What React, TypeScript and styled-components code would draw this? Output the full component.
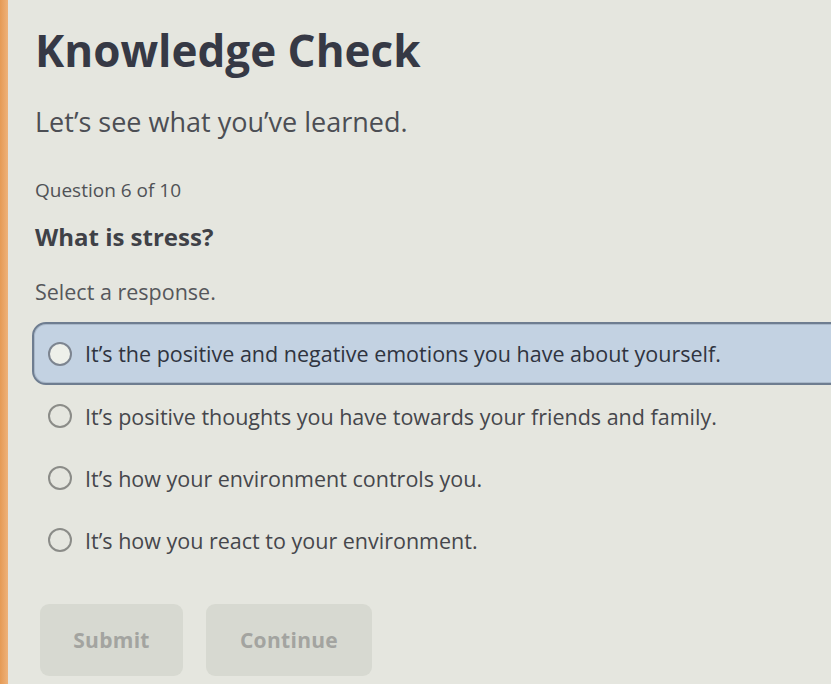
import styled, { createGlobalStyle } from "styled-components";

const GlobalStyle = createGlobalStyle`
  html, body {
    margin: 0;
    padding: 0;
    background: #e5e6df;
  }
  body {
    font-family: "Open Sans", "Liberation Sans", sans-serif;
    color: #3c3e48;
  }
`;

const Page = styled.div`
  display: flex;
  width: 831px;
  height: 684px;
  overflow: hidden;
  background: #e5e6df;
`;

const AccentStrip = styled.div`
  flex: 0 0 8px;
  background: linear-gradient(90deg, #e59a55, #eeb27a);
`;

const Content = styled.main`
  flex: 1;
  display: flex;
  flex-direction: column;
  padding: 22px 0 0 27px;
`;

const Title = styled.h1`
  margin: 0;
  font-size: 44px;
  font-weight: 700;
  line-height: 56px;
  color: #363945;
`;

const Intro = styled.p`
  margin: 27px 0 0;
  font-size: 27px;
  line-height: 34px;
  color: #4c4e54;
`;

const Counter = styled.div`
  margin-top: 39px;
  font-size: 19px;
  line-height: 24px;
  color: #505256;
`;

const Question = styled.h2`
  margin: 20px 0 0;
  font-size: 24px;
  font-weight: 700;
  line-height: 30px;
  color: #3f4147;
`;

const Prompt = styled.div`
  margin-top: 26px;
  font-size: 21.5px;
  line-height: 28px;
  color: #55575b;
`;

const Options = styled.div`
  display: flex;
  flex-direction: column;
  margin: 16px -40px 0 -3px;
`;

const Option = styled.label<{ $active?: boolean }>`
  display: flex;
  align-items: center;
  gap: 13px;
  height: ${(p) => (p.$active ? "63px" : "62px")};
  box-sizing: border-box;
  padding-left: 14px;
  border: 2px solid ${(p) => (p.$active ? "#6e7d90" : "transparent")};
  border-radius: 14px;
  background: ${(p) => (p.$active ? "#c3d2e2" : "transparent")};
  box-shadow: ${(p) => (p.$active ? "inset 0 0 0 1px #a9b8c9" : "none")};
  font-size: 21.5px;
  color: ${(p) => (p.$active ? "#2f3440" : "#45474c")};
  cursor: pointer;
`;

const Radio = styled.span<{ $active?: boolean }>`
  flex: 0 0 auto;
  width: 20px;
  height: 20px;
  border-radius: 50%;
  border: 2px solid ${(p) => (p.$active ? "#7d8590" : "#8b8c88")};
  background: ${(p) => (p.$active ? "#eef0ea" : "transparent")};
`;

const Actions = styled.div`
  display: flex;
  align-items: flex-start;
  gap: 23px;
  margin: 33px 0 0 5px;
`;

const Button = styled.button<{ $wide?: boolean }>`
  width: ${(p) => (p.$wide ? "166px" : "143px")};
  height: 72px;
  border: none;
  border-radius: 9px;
  background: #d7d9d1;
  font-family: "Open Sans", "Liberation Sans", sans-serif;
  font-size: 21px;
  font-weight: 700;
  letter-spacing: 0.3px;
  color: #a3a4a0;
  cursor: default;
`;

const answers = [
  "It\u2019s the positive and negative emotions you have about yourself.",
  "It\u2019s positive thoughts you have towards your friends and family.",
  "It\u2019s how your environment controls you.",
  "It\u2019s how you react to your environment.",
];

export default function App() {
  return (
    <>
      <GlobalStyle />
      <Page>
        <AccentStrip />
        <Content>
          <Title>Knowledge Check</Title>
          <Intro>Let&rsquo;s see what you&rsquo;ve learned.</Intro>
          <Counter>Question 6 of 10</Counter>
          <Question>What is stress?</Question>
          <Prompt>Select a response.</Prompt>
          <Options>
            {answers.map((text, i) => (
              <Option key={text} $active={i === 0}>
                <Radio $active={i === 0} />
                {text}
              </Option>
            ))}
          </Options>
          <Actions>
            <Button>Submit</Button>
            <Button $wide>Continue</Button>
          </Actions>
        </Content>
      </Page>
    </>
  );
}
